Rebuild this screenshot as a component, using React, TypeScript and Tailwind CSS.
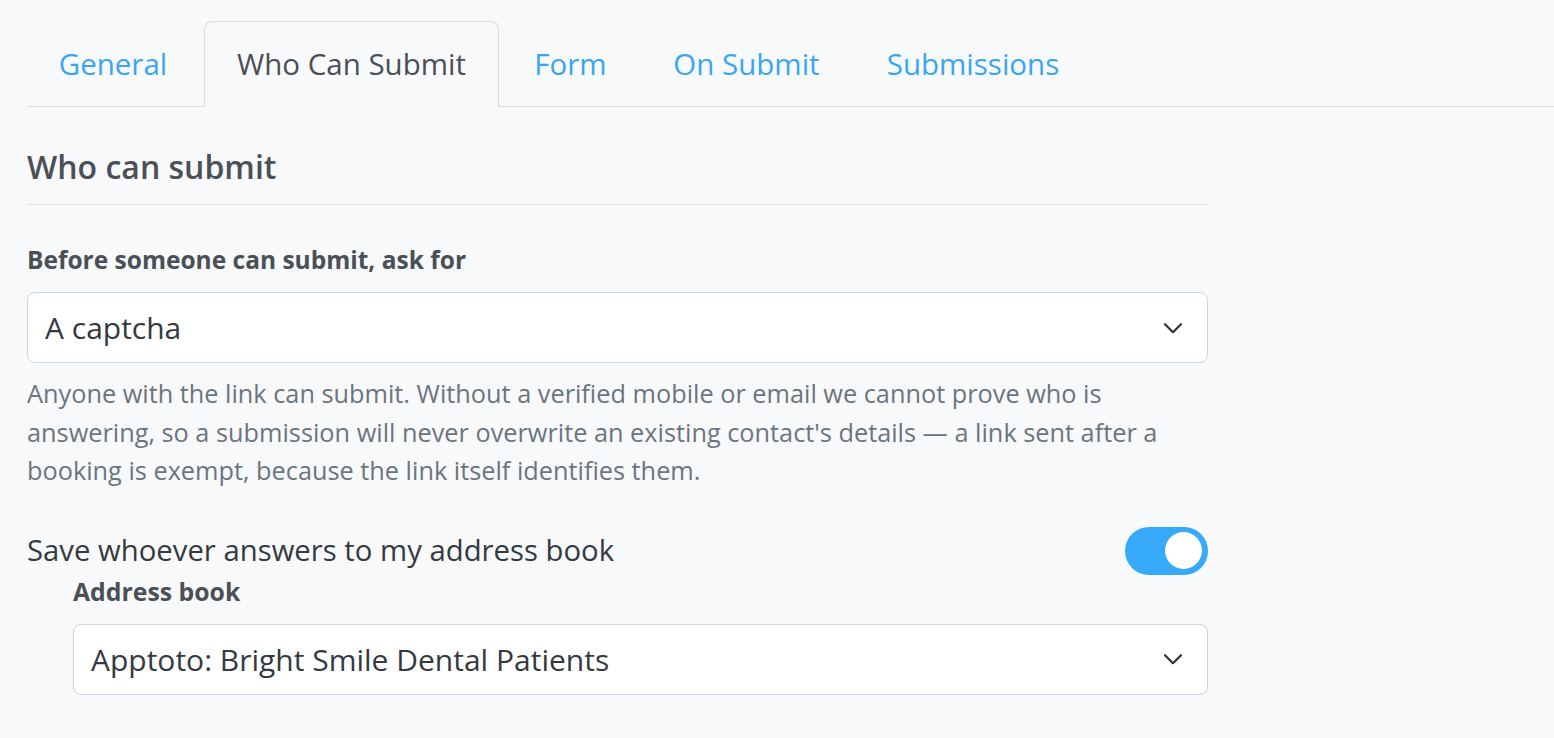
import { useState } from "react";

const tabs = [
  { id: "general", name: "General", width: "w-[172px]" },
  { id: "who", name: "Who Can Submit", width: "w-[295px]" },
  { id: "form", name: "Form", width: "w-[133px]" },
  { id: "onsubmit", name: "On Submit", width: "w-[209px]" },
  { id: "submissions", name: "Submissions", width: "w-[234px]" },
];

function Chevron() {
  return (
    <svg
      width="20"
      height="12"
      viewBox="0 0 20 12"
      fill="none"
      className="shrink-0"
    >
      <path
        d="M2 2.2l8 8 8-8"
        stroke="#2f3439"
        strokeWidth="2.2"
        strokeLinecap="round"
        strokeLinejoin="round"
      />
    </svg>
  );
}

type SelectProps = {
  value: string;
};

function SelectBox(props: SelectProps) {
  const { value } = props;
  return (
    <button
      type="button"
      className="flex items-center justify-between w-full h-[71px] pl-[17px] pr-[24px] bg-white border border-[#cdd4e2] rounded-[8px] text-left"
    >
      <span className="text-[30px] text-[#343a40]">{value}</span>
      <Chevron />
    </button>
  );
}

export default function App() {
  const [activeTab, setActiveTab] = useState("who");
  const [saveContacts, setSaveContacts] = useState(true);

  return (
    <div
      className="min-h-screen bg-[#f7f9fb] pt-[21px] pl-[27px]"
      style={{ fontFamily: '"Open Sans", "Liberation Sans", sans-serif' }}
    >
      <nav className="flex gap-[5px] border-b border-[#d9dce1]">
        {tabs.map(({ id, name, width }) => {
          const isActive = id === activeTab;
          return (
            <button
              key={id}
              type="button"
              onClick={() => setActiveTab(id)}
              className={
                isActive
                  ? `${width} h-[86px] -mb-px flex items-center justify-center text-[29.5px] text-[#4a4f55] bg-[#f7f9fb] border border-[#d9dce1] border-b-[#f7f9fb] rounded-t-[8px]`
                  : `${width} h-[86px] -mb-px flex items-center justify-center text-[29.5px] text-[#3aa6f1] border border-transparent`
              }
            >
              {name}
            </button>
          );
        })}
      </nav>

      <div className="w-[1181px]">
        <h2 className="mt-[40px] pb-[17px] border-b border-[#e1e4e8] text-[32px] leading-[40px] font-semibold text-[#4a5056]">
          Who can submit
        </h2>

        <label className="block mt-[40px] text-[24.5px] leading-[30px] font-bold text-[#4a5056]">
          Before someone can submit, ask for
        </label>
        <div className="mt-[17px]">
          <SelectBox value="A captcha" />
        </div>
        <p className="mt-[11px] text-[25.3px] leading-[38.5px] text-[#6c757d]">
          Anyone with the link can submit. Without a verified mobile or email
          we cannot prove who is answering, so a submission will never
          overwrite an existing contact's details — a link sent after a booking
          is exempt, because the link itself identifies them.
        </p>

        <div className="flex items-center justify-between mt-[37px]">
          <span className="text-[29.3px] text-[#343a40]">
            Save whoever answers to my address book
          </span>
          <button
            type="button"
            onClick={() => setSaveContacts(!saveContacts)}
            className={
              saveContacts
                ? "flex items-center justify-end w-[83px] h-[48px] px-[6px] rounded-full bg-[#36a9f8]"
                : "flex items-center justify-start w-[83px] h-[48px] px-[6px] rounded-full bg-[#d5dae1]"
            }
          >
            <span className="w-[37px] h-[37px] rounded-full bg-white" />
          </button>
        </div>

        <div className="pl-[46px]">
          <label className="block mt-[1px] text-[24.8px] leading-[30px] font-bold text-[#4a5056]">
            Address book
          </label>
          <div className="mt-[18px]">
            <SelectBox value="Apptoto: Bright Smile Dental Patients" />
          </div>
        </div>
      </div>
    </div>
  );
}
